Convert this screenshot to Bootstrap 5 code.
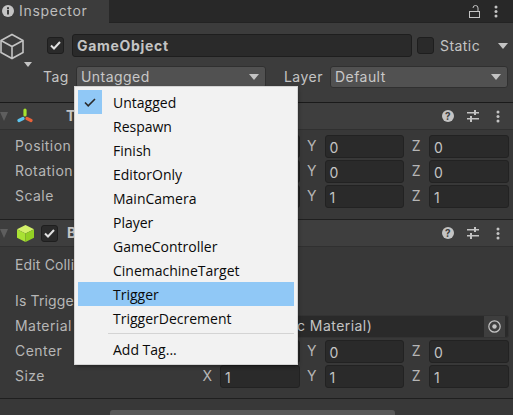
<!DOCTYPE html>
<html lang="en">
<head>
  <meta charset="UTF-8">
  <title>Inspector</title>
  <link href="https://cdn.jsdelivr.net/npm/bootstrap@5.3.0/dist/css/bootstrap.min.css" rel="stylesheet">
  <style>
    html, body { height: 100%; overflow: hidden; }
    body { background: #383838; color: #c4c4c4; font: 14px/20px Inter, "Liberation Sans", sans-serif; letter-spacing: .45px; }
    svg { display: block; flex: none; }
    .inspector { position: relative; width: 513px; height: 415px; overflow: hidden; }

    .tab-strip { height: 23px; background: #282828; border-bottom: 1px solid #232323; }
    .tab-item { width: 109px; height: 23px; background: #3c3c3c; padding-left: 2px; gap: 5px; color: #bdbdbd; letter-spacing: .7px; }
    .tab-tools { gap: 14px; padding-right: 15px; }

    .object-head { height: 80px; background: #3c3c3c; border-bottom: 1px solid #1a1a1a; position: relative; padding: 11px 4px 0 0; }
    .head-line { height: 23px; }
    .tag-line { margin-top: 8px; }
    .cube-slot { width: 47px; padding-top: 1px; }
    .cube-caret { position: absolute; left: 24px; top: 39px; }
    .tag-label { width: 76px; padding-left: 43px; }
    .layer-label { width: 46px; margin-left: 18px; }

    .check-box { width: 17px; height: 17px; background: #2a2a2a; border: 1px solid #1e1e1e; border-radius: 3px; flex: none; }
    .name-field { width: 340px; margin-left: 8px; margin-right: 5px; height: 23px; background: #2a2a2a; border: 1px solid #1e1e1e; border-radius: 3px; padding: 0 4px; font-weight: 700; color: #c4c4c4; line-height: 21px; letter-spacing: .7px; }
    .static-label { margin-left: 6px; width: 58px; }
    .pick-field { height: 22px; background: #515151; border: 1px solid #303030; border-radius: 3px; padding: 0 6px 0 4px; line-height: 20px; color: #c8c8c8; }
    .tag-pick { width: 190px; }
    .layer-pick { width: 178px; }

    .comp-head { height: 27px; background: #3e3e3e; border-bottom: 1px solid #303030; padding-right: 9px; }
    .comp-title { font-weight: 700; color: #c4c4c4; }
    .transform-title { margin-left: 33px; }
    .collider-title { margin-left: 9px; }
    .comp-tools { gap: 13px; margin-left: auto; }
    .comp-icon { margin-left: 9px; }
    .comp-check { margin-left: 7px; }
    .transform-body { height: 90px; padding-top: 5px; border-bottom: 1px solid #1f1f1f; }
    .collider-body { height: 152px; padding-top: 7px; border-bottom: 1px solid #1f1f1f; }

    .prop-row { height: 22px; margin-bottom: 3px; padding-left: 15px; }
    .prop-name { width: 180px; flex: none; color: #b6b6b6; }
    .tight-name { letter-spacing: .15px; }
    .edit-row { margin-bottom: 14px; }
    .axis-set { display: grid; grid-template-columns: repeat(3, 25px 79.5px); }
    .axis-name { text-align: center; color: #b6b6b6; line-height: 22px; }
    .num-field { height: 23px; background: #2a2a2a; border: 1px solid #222; border-radius: 3px; padding: 0 4px; line-height: 23px; color: #c4c4c4; }
    .object-field { width: 309px; height: 23px; margin-left: 5px; background: #2a2a2a; border: 1px solid #333; border-radius: 3px; padding: 0 3px 0 96px; line-height: 22px; color: #c4c4c4; }
    .object-pick { width: 21px; height: 21px; background: #3e3e3e; margin-left: auto; }

    .add-button { position: absolute; left: 110px; top: 410px; width: 285px; height: 24px; background: #585858; border-radius: 3px; }

    .tag-menu { display: block; position: absolute; left: 75px; top: 87px; width: 222px; height: 277px; min-width: 0; margin: 0; padding: 3px; background: #f2f2f2; border: 0; border-radius: 0; box-shadow: 0 0 0 1px #d4d4d4, 1px 2px 4px rgba(0, 0, 0, .45); font: 14px/25px "Open Sans", "Noto Sans", sans-serif; letter-spacing: 0; }
    .tag-menu .dropdown-item { height: 24px; padding: 0 0 0 35px; color: #0a0a0a; width: 216px; position: relative; }
    .tag-menu .dropdown-item.active { background: #90c8f6; color: #0a0a0a; }
    .tick-tile { position: absolute; left: 0; top: 0; width: 24px; height: 24px; background: #90c8f6; display: flex; align-items: center; justify-content: center; }
    .tag-menu .dropdown-divider { margin: 3px 0 3px 30px; width: 186px; border-color: #d4d4d4; opacity: 1; }
  </style>
</head>
<body>
  <div class="inspector">
    <!-- tab strip -->
    <div class="tab-strip d-flex justify-content-between align-items-center">
      <div class="tab-item d-flex align-items-center">
        <svg width="12" height="12" viewBox="0 0 12 12"><circle cx="6" cy="6" r="6" fill="#c4c4c4"/><rect x="5" y="5" width="2" height="4.5" fill="#3c3c3c"/><rect x="5" y="2.2" width="2" height="2" fill="#3c3c3c"/></svg>
        <span>Inspector</span>
      </div>
      <div class="tab-tools d-flex align-items-center">
        <svg width="11" height="13" viewBox="0 0 11 13" fill="none" stroke="#c4c4c4"><rect x=".5" y="6.5" width="10" height="6"/><path d="M9 6V3a2.5 2.5 0 0 0-5 0"/></svg>
        <svg width="4" height="13" viewBox="0 0 4 13" fill="#c4c4c4"><circle cx="2" cy="2" r="1.5"/><circle cx="2" cy="6.5" r="1.5"/><circle cx="2" cy="11" r="1.5"/></svg>
      </div>
    </div>

    <!-- game object header -->
    <div class="object-head">
      <div class="head-line d-flex align-items-center">
        <div class="cube-slot">
          <svg width="24" height="27" viewBox="0 0 24 27" fill="none" stroke="#c4c4c4" stroke-width="1.6"><path d="M12 1.5 23 7.5V19.5L12 25.5 1 19.5V7.5ZM1 7.5 12 13.5 23 7.5M12 13.5V25.5"/></svg>
        </div>
        <div class="check-box d-flex align-items-center justify-content-center">
          <svg width="11" height="9" viewBox="0 0 11 9" fill="none" stroke="#e0e0e0" stroke-width="2"><path d="M1 4.5 4 7.5 10 1"/></svg>
        </div>
        <div class="name-field">GameObject</div>
        <div class="check-box"></div>
        <div class="static-label">Static</div>
        <svg width="10" height="6" viewBox="0 0 10 6" fill="#c4c4c4"><path d="M0 0H10L5 6Z"/></svg>
      </div>
      <svg class="cube-caret" width="8" height="5" viewBox="0 0 8 5" fill="#c4c4c4"><path d="M0 0H8L4 5Z"/></svg>
      <div class="head-line tag-line d-flex align-items-center">
        <div class="tag-label">Tag</div>
        <div class="pick-field tag-pick d-flex justify-content-between align-items-center">Untagged
          <svg width="10" height="6" viewBox="0 0 10 6" fill="#c4c4c4"><path d="M0 0H10L5 6Z"/></svg>
        </div>
        <div class="layer-label">Layer</div>
        <div class="pick-field layer-pick d-flex justify-content-between align-items-center">Default
          <svg width="10" height="6" viewBox="0 0 10 6" fill="#c4c4c4"><path d="M0 0H10L5 6Z"/></svg>
        </div>
      </div>
    </div>

    <!-- transform -->
    <div class="comp-head d-flex align-items-center">
      <svg width="8" height="9" viewBox="0 0 8 9" fill="#5e5e5e"><path d="M0 0H8L4 9Z"/></svg>
      <svg class="comp-icon" width="16" height="16" viewBox="0 0 16 16" fill="none" stroke-width="3.2" stroke-linecap="round"><path d="M8 7V2" stroke="#a6e22e"/><path d="M6 10.5 2 12.5" stroke="#5cc4ee"/><path d="M10 10.5 14 12.5" stroke="#e8623a"/></svg>
      <div class="comp-title transform-title">T</div>
      <div class="comp-tools d-flex align-items-center">
        <svg width="12" height="12" viewBox="0 0 12 12"><circle cx="6" cy="6" r="6" fill="#c4c4c4"/><text x="6" y="10" text-anchor="middle" font-size="10" font-weight="700" font-family="Inter, sans-serif" fill="#3e3e3e">?</text></svg>
        <svg width="12" height="12" viewBox="0 0 12 12" fill="#c4c4c4"><rect y="2" width="12" height="1.5"/><rect x="7" y="0" width="2" height="5"/><rect y="8" width="12" height="1.5"/><rect x="3" y="6" width="2" height="6"/></svg>
        <svg class="mx-1" width="4" height="13" viewBox="0 0 4 13" fill="#c4c4c4"><circle cx="2" cy="2" r="1.5"/><circle cx="2" cy="6.5" r="1.5"/><circle cx="2" cy="11" r="1.5"/></svg>
      </div>
    </div>
    <div class="transform-body">
      <div class="prop-row d-flex align-items-center"><div class="prop-name">Position</div>
        <div class="axis-set"><div class="axis-name">X</div><div class="num-field">0</div><div class="axis-name">Y</div><div class="num-field">0</div><div class="axis-name">Z</div><div class="num-field">0</div></div></div>
      <div class="prop-row d-flex align-items-center"><div class="prop-name">Rotation</div>
        <div class="axis-set"><div class="axis-name">X</div><div class="num-field">0</div><div class="axis-name">Y</div><div class="num-field">0</div><div class="axis-name">Z</div><div class="num-field">0</div></div></div>
      <div class="prop-row d-flex align-items-center"><div class="prop-name">Scale</div>
        <div class="axis-set"><div class="axis-name">X</div><div class="num-field">1</div><div class="axis-name">Y</div><div class="num-field">1</div><div class="axis-name">Z</div><div class="num-field">1</div></div></div>
    </div>

    <!-- box collider -->
    <div class="comp-head d-flex align-items-center">
      <svg width="8" height="9" viewBox="0 0 8 9" fill="#5e5e5e"><path d="M0 0H8L4 9Z"/></svg>
      <svg class="comp-icon" width="17" height="17" viewBox="0 0 17 17"><path d="M8.5 0 17 4.2 8.5 8.5 0 4.2Z" fill="#d3f06a"/><path d="M0 4.2 8.5 8.5V17L0 12.8Z" fill="#a9e234"/><path d="M17 4.2 8.5 8.5V17L17 12.8Z" fill="#93d024"/></svg>
      <div class="check-box comp-check d-flex align-items-center justify-content-center">
        <svg width="11" height="9" viewBox="0 0 11 9" fill="none" stroke="#e0e0e0" stroke-width="2"><path d="M1 4.5 4 7.5 10 1"/></svg>
      </div>
      <div class="comp-title collider-title">B</div>
      <div class="comp-tools d-flex align-items-center">
        <svg width="12" height="12" viewBox="0 0 12 12"><circle cx="6" cy="6" r="6" fill="#c4c4c4"/><text x="6" y="10" text-anchor="middle" font-size="10" font-weight="700" font-family="Inter, sans-serif" fill="#3e3e3e">?</text></svg>
        <svg width="12" height="12" viewBox="0 0 12 12" fill="#c4c4c4"><rect y="2" width="12" height="1.5"/><rect x="7" y="0" width="2" height="5"/><rect y="8" width="12" height="1.5"/><rect x="3" y="6" width="2" height="6"/></svg>
        <svg class="mx-1" width="4" height="13" viewBox="0 0 4 13" fill="#c4c4c4"><circle cx="2" cy="2" r="1.5"/><circle cx="2" cy="6.5" r="1.5"/><circle cx="2" cy="11" r="1.5"/></svg>
      </div>
    </div>
    <div class="collider-body">
      <div class="prop-row edit-row d-flex align-items-center"><div class="prop-name tight-name">Edit Colli</div></div>
      <div class="prop-row d-flex align-items-center"><div class="prop-name tight-name">Is Trigge</div></div>
      <div class="prop-row d-flex align-items-center"><div class="prop-name">Material</div>
        <div class="object-field d-flex align-items-center">c Material)
          <div class="object-pick d-flex align-items-center justify-content-center">
            <svg width="13" height="13" viewBox="0 0 13 13" fill="none" stroke="#c4c4c4" stroke-width="1.2"><circle cx="6.5" cy="6.5" r="5.7"/><circle cx="6.5" cy="6.5" r="2.2" fill="#c4c4c4" stroke="none"/></svg>
          </div>
        </div></div>
      <div class="prop-row d-flex align-items-center"><div class="prop-name">Center</div>
        <div class="axis-set"><div class="axis-name">X</div><div class="num-field">0</div><div class="axis-name">Y</div><div class="num-field">0</div><div class="axis-name">Z</div><div class="num-field">0</div></div></div>
      <div class="prop-row d-flex align-items-center"><div class="prop-name">Size</div>
        <div class="axis-set"><div class="axis-name">X</div><div class="num-field">1</div><div class="axis-name">Y</div><div class="num-field">1</div><div class="axis-name">Z</div><div class="num-field">1</div></div></div>
    </div>

    <div class="add-button"></div>

    <!-- open tag dropdown -->
    <ul class="dropdown-menu tag-menu list-unstyled">
      <li><div class="dropdown-item"><span class="tick-tile"><svg width="12" height="9" viewBox="0 0 12 9" fill="none" stroke="#2a2a2a" stroke-width="1.6"><path d="M1 4.5 4.2 7.8 11 1"/></svg></span>Untagged</div></li>
      <li><div class="dropdown-item">Respawn</div></li>
      <li><div class="dropdown-item">Finish</div></li>
      <li><div class="dropdown-item">EditorOnly</div></li>
      <li><div class="dropdown-item">MainCamera</div></li>
      <li><div class="dropdown-item">Player</div></li>
      <li><div class="dropdown-item">GameController</div></li>
      <li><div class="dropdown-item">CinemachineTarget</div></li>
      <li><div class="dropdown-item active">Trigger</div></li>
      <li><div class="dropdown-item">TriggerDecrement</div></li>
      <li><hr class="dropdown-divider"></li>
      <li><div class="dropdown-item">Add Tag...</div></li>
    </ul>
  </div>
  <script src="https://cdn.jsdelivr.net/npm/bootstrap@5.3.0/dist/js/bootstrap.bundle.min.js"></script>
</body>
</html>
